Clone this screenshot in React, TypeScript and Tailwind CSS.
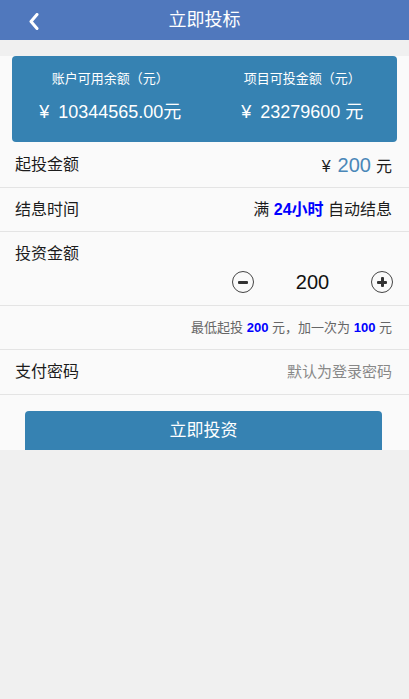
import { useState } from 'react'

// 投标页面：账户余额卡片 + 投资金额步进器
const FONT = { fontFamily: '"Liberation Sans", Arial, "Noto Sans CJK SC", sans-serif' }

function Row({ label, children, className = '' }: { label: string; children?: React.ReactNode; className?: string }) {
  return (
    <div className={`flex items-center justify-between border-b border-[#e4e4e4] pl-[15px] pr-[17px] ${className}`}>
      <span className="text-[16px] text-[#1c1c1c]">{label}</span>
      {children}
    </div>
  )
}

export default function App() {
  const [amount, setAmount] = useState(200)

  return (
    <div className="min-h-[699px] bg-[#f0f0f0]" style={FONT}>
      {/* ヘッダー */}
      <header className="relative flex h-10 items-center justify-center bg-[#5078bd]">
        <button className="absolute left-[24px] top-[9px] p-1">
          <svg width="12" height="17" viewBox="0 0 12 17" fill="none">
            <path d="M9 1.5L3 8.5L9 15.5" stroke="white" strokeWidth="3" strokeLinecap="round" strokeLinejoin="round" />
          </svg>
        </button>
        <h1 className="text-[18px] text-white">立即投标</h1>
      </header>

      <main className="bg-[#fafafa]">
        {/* 残高カード */}
        <div className="mx-3 mt-4 grid h-[86px] grid-cols-2 rounded-[4px] bg-[#3682b2] pt-[14px] text-center text-white">
          <div className="pl-1">
            <p className="text-[13px] leading-[18px]">账户可用余额（元）</p>
            <p className="mt-[12px] text-[18px] leading-[24px]">
              <span className="mr-[4px]">¥</span> 10344565.00元
            </p>
          </div>
          <div className="pl-[3px]">
            <p className="text-[13px] leading-[18px]">项目可投金额（元）</p>
            <p className="mt-[12px] text-[18px] leading-[24px]">
              <span className="mr-[4px]">¥</span> 23279600 元
            </p>
          </div>
        </div>

        <Row label="起投金额" className="h-[46px] pt-[1px]">
          <span className="flex items-baseline text-[16px] text-[#1c1c1c]">
            ¥<span className="ml-[7px] mr-[5px] text-[20px] text-[#4a87b8]">200</span>元
          </span>
        </Row>

        <Row label="结息时间" className="h-[44px]">
          <span className="text-[16px] text-[#1c1c1c]">
            满 <b className="font-bold text-[#0000ff]">24小时</b> 自动结息
          </span>
        </Row>

        {/* 投资金额 */}
        <div className="border-b border-[#e4e4e4] pb-[12px] pl-[15px] pr-[16px] pt-[12px]">
          <p className="text-[16px] leading-[20px] text-[#1c1c1c]">投资金额</p>
          <div className="mt-[7px] flex items-center justify-end">
            <button
              onClick={() => setAmount((a) => Math.max(200, a - 100))}
              className="flex h-[22px] w-[22px] items-center justify-center rounded-full border-[1.5px] border-[#444]"
            >
              <span className="h-[3px] w-[10px] rounded-[1px] bg-[#333]" />
            </button>
            <span className="w-[117px] text-center text-[20px] leading-[22px] text-[#111]">{amount}</span>
            <button
              onClick={() => setAmount((a) => a + 100)}
              className="relative flex h-[22px] w-[22px] items-center justify-center rounded-full border-[1.5px] border-[#444]"
            >
              <span className="absolute h-[3px] w-[10px] rounded-[1px] bg-[#333]" />
              <span className="absolute h-[10px] w-[3px] rounded-[1px] bg-[#333]" />
            </button>
          </div>
        </div>

        <div className="flex h-[44px] items-center justify-end border-b border-[#e4e4e4] pr-[17px] text-[13px] text-[#666]">
          最低起投&nbsp;<b className="font-bold text-[#0000ff]">200</b>&nbsp;元，加一次为&nbsp;<b className="font-bold text-[#0000ff]">100</b>&nbsp;元
        </div>

        <Row label="支付密码" className="h-[45px]">
          <input
            type="password"
            placeholder="默认为登录密码"
            className="w-[180px] bg-transparent text-right text-[15px] outline-none placeholder:text-[#888]"
          />
        </Row>

        <div className="pt-4">
          <button className="ml-[25px] h-[39px] w-[357px] rounded-t-[4px] bg-[#3682b2] pt-[1px] text-[17px] text-white">
            立即投资
          </button>
        </div>
      </main>
    </div>
  )
}
